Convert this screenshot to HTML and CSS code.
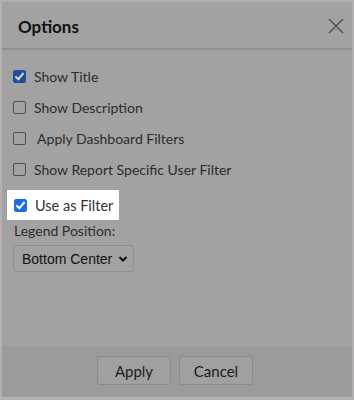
FILE: index.html
```html
<!DOCTYPE html>
<html lang="en">
<head>
    <meta charset="UTF-8">
    <meta name="viewport" content="width=device-width, initial-scale=1.0">
    <title>Options</title>
    <link rel="stylesheet" href="styles.css">
</head>
<body>
    <div class="dialog">
        <header class="dialog-head">
            <h1>Options</h1>
            <svg class="close" width="16" height="16" viewBox="0 0 16 16">
                <path d="M1 1 L15 15 M15 1 L1 15" stroke="#4a4a4a" stroke-width="1.2" fill="none"/>
            </svg>
        </header>

        <div class="dialog-body">
            <label class="option"><span class="box checked"></span>Show Title</label>
            <label class="option"><span class="box"></span>Show Description</label>
            <label class="option"><span class="box"></span>&nbsp;Apply Dashboard Filters</label>
            <label class="option"><span class="box"></span>Show Report Specific User Filter</label>

            <label class="option spotlight"><span class="box checked"></span>Use as Filter</label>

            <p class="legend-label">Legend Position:</p>
            <div class="select">Bottom Center
                <svg width="10" height="8" viewBox="0 0 10 8">
                    <path d="M1.5 2 L5 5.5 L8.5 2" stroke="#111" stroke-width="2" fill="none"/>
                </svg>
            </div>
        </div>

        <footer class="dialog-foot">
            <button class="btn">Apply</button>
            <button class="btn">Cancel</button>
        </footer>
    </div>
</body>
</html>
```

FILE: styles.css
```css
body {
    margin: 0;
    padding: 2px 2px 3px 2px;
    background-color: #b4b0b0;
    font-family: Lato, "Open Sans", sans-serif;
    color: #2a2a2a;
}

.dialog {
    height: 395px;
    background-color: #a2a2a2;
    display: flex;
    flex-direction: column;
}

.dialog-head {
    height: 46px;
    display: flex;
    align-items: center;
    justify-content: space-between;
    padding: 0 8px 0 16px;
    border-bottom: 2px solid #8f8f8f;
}

.dialog-head h1 {
    margin: 2px 0 0;
    font-size: 17px;
    font-weight: bold;
    color: #111;
}

.close {
    margin-top: 2px;
}

.dialog-body {
    flex: 1;
    padding: 11px 11px 0;
}

.option {
    display: flex;
    align-items: center;
    height: 31px;
    font-size: 14px;
    color: #2c2c2c;
}

.box {
    width: 11px;
    height: 11px;
    border: 1px solid #4f4f4f;
    border-radius: 2px;
    margin-right: 8px;
    box-sizing: content-box;
    position: relative;
}

.box.checked {
    background-color: #1f4f98;
    border-color: #1f4f98;
}

.box.checked::after {
    content: "";
    position: absolute;
    left: 3px;
    top: 0px;
    width: 3px;
    height: 7px;
    border: solid #d8d8d8;
    border-width: 0 2px 2px 0;
    transform: rotate(40deg);
}

.spotlight {
    background-color: #fff;
    margin: 5px 0 0 -6px;
    padding: 0 6px 0 7px;
    width: fit-content;
    height: 30px;
    font-size: 14.5px;
    color: #333;
}

.spotlight .box.checked {
    background-color: #1a6ee6;
    border-color: #1a6ee6;
}

.spotlight .box.checked::after {
    border-color: #fff;
}

.legend-label {
    margin: 2px 0 0 1px;
    font-size: 14px;
    color: #2c2c2c;
}

.select {
    display: inline-flex;
    align-items: center;
    gap: 6px;
    margin: 6px 0 0 0;
    height: 25px;
    padding: 0 5px 0 8px;
    border: 1px solid #8e8e8e;
    border-radius: 3px;
    font-family: "Liberation Sans", Arial, sans-serif;
    font-size: 14px;
    color: #111;
}

.dialog-foot {
    height: 51px;
    background-color: #9b9b9b;
    display: flex;
    justify-content: center;
    align-items: flex-start;
    gap: 8px;
    padding: 10px 4px 0 0;
    box-sizing: border-box;
}

.btn {
    width: 74px;
    height: 29px;
    background-color: #a0a0a0;
    border: 1px solid #8b8b8b;
    border-radius: 3px;
    font-family: Lato, sans-serif;
    font-size: 15px;
    color: #1a1a1a;
}
```
